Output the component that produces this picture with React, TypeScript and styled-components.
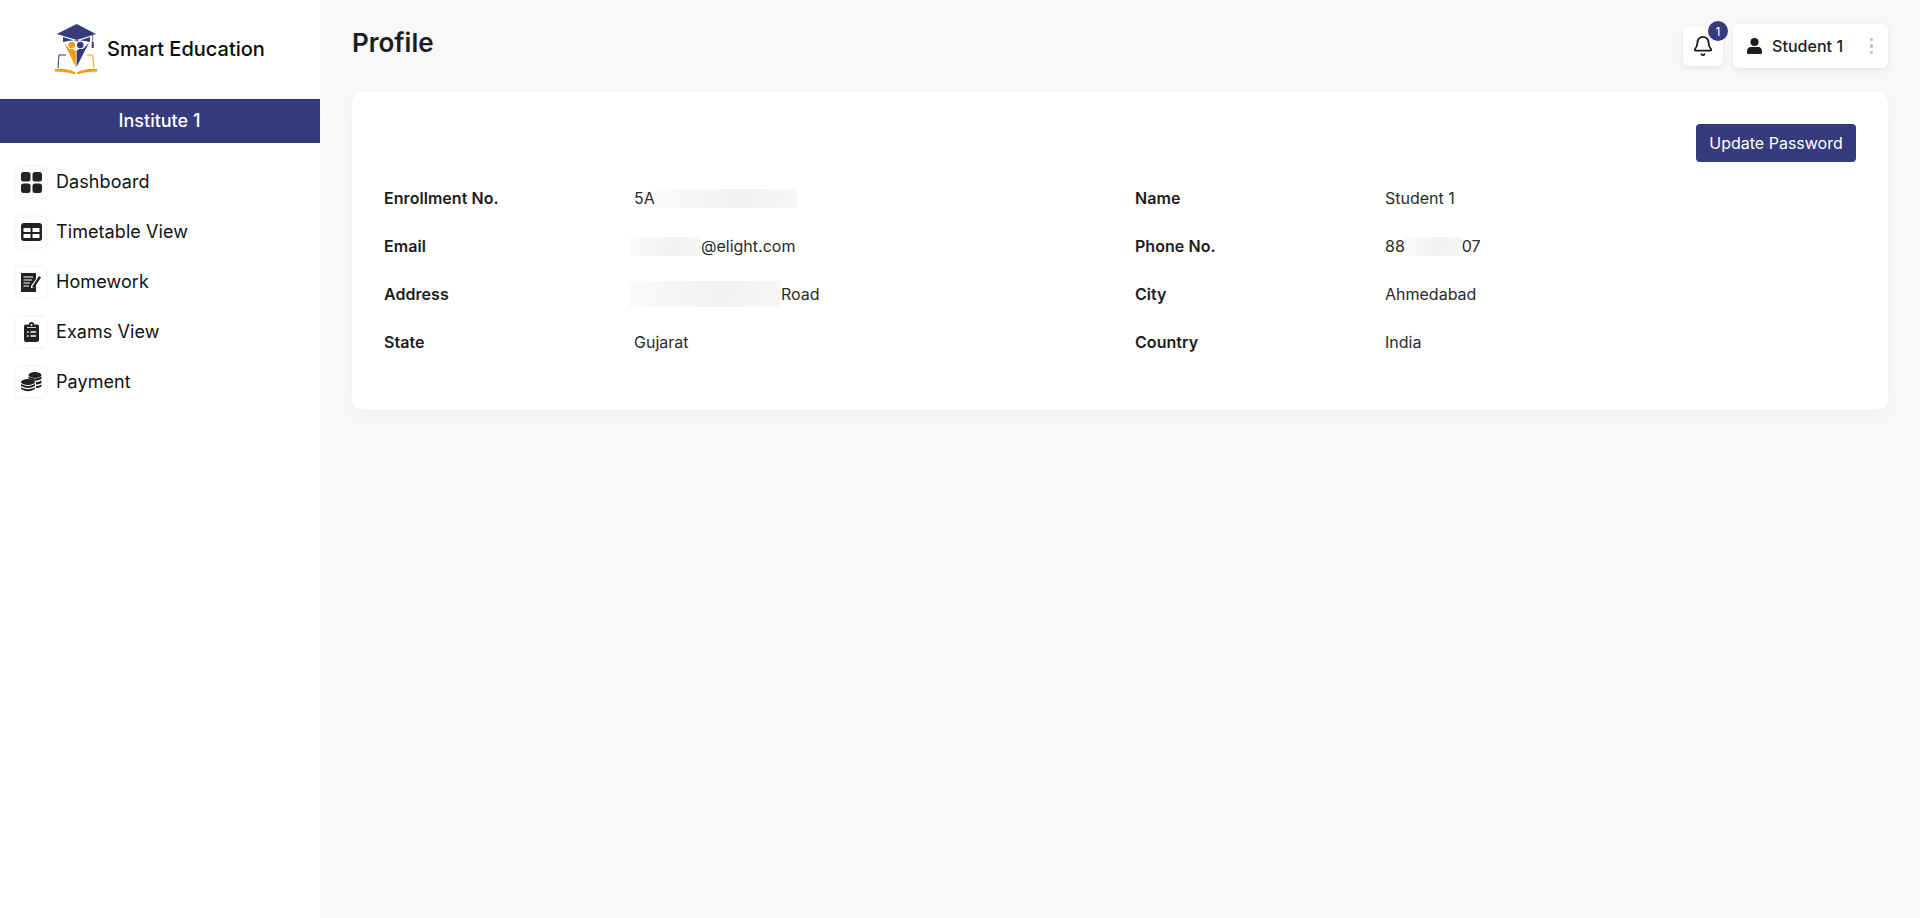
import React from "react";
import styled, { createGlobalStyle } from "styled-components";
import { Bell } from "lucide-react";

const GlobalStyle = createGlobalStyle`
    html, body {
        margin: 0;
        padding: 0;
        height: 100%;
        background: #f8f8f8;
        font-family: Inter, "Liberation Sans", sans-serif;
        color: #1c1c1c;
    }
`;

const navy = "#353b7c";
const orange = "#f39c12";

const LogoMark = () => (
    <svg width="46" height="52" viewBox="0 0 46 52">
        <path d="M2.700 11 L22.700 1 L42 11 L22.700 17 Z" fill={navy} />
        <path d="M9 14 L22.700 18.500 L36 14 V19 Q22.700 15.500 9 19 Z" fill={navy} />
        <path d="M27 12 L38.700 11.500 V19" fill="none" stroke={navy} strokeWidth="0.700" />
        <rect x="37.700" y="19" width="2" height="6" fill={navy} />
        <circle cx="17.700" cy="22" r="3.300" fill={orange} />
        <circle cx="26.300" cy="22" r="3.300" fill={navy} />
        <path d="M10 19.700 L15.500 26 H19 L21.800 28 V44 Z" fill={orange} />
        <path d="M35 19.700 L29 26 H25 L22.600 28 V44 Z" fill={navy} />
        <path d="M12 32 H5 L4 45" fill="none" stroke={navy} strokeWidth="1" />
        <path d="M33 32 H38.700 L40 45" fill="none" stroke={orange} strokeWidth="1" />
        <path d="M1 46 Q13 45 21.500 49.500 V51.500 Q12 48.500 1 48.500 Z" fill={orange} />
        <path d="M43 46 Q31 45 23 49.500 V51.500 Q32 48.500 43 48.500 Z" fill={orange} />
    </svg>
);

const DashboardIcon = () => (
    <svg width="21" height="21" viewBox="0 0 21 21" fill="#222">
        <rect x="0" y="0" width="9.500" height="9.500" rx="2.500" />
        <rect x="11.500" y="0" width="9.500" height="9.500" rx="2.500" />
        <rect x="0" y="11.500" width="9.500" height="9.500" rx="2.500" />
        <rect x="11.500" y="11.500" width="9.500" height="9.500" rx="2.500" />
    </svg>
);

const TimetableIcon = () => (
    <svg width="21" height="18" viewBox="0 0 21 18">
        <rect width="21" height="18" rx="3" fill="#222" />
        <rect x="2.500" y="5" width="7" height="4" fill="#fff" />
        <rect x="11.500" y="5" width="7" height="4" fill="#fff" />
        <rect x="2.500" y="11" width="7" height="4" fill="#fff" />
        <rect x="11.500" y="11" width="7" height="4" fill="#fff" />
    </svg>
);

const HomeworkIcon = () => (
    <svg width="20" height="20" viewBox="0 0 20 20">
        <path d="M0 1 H15 V7 L10 14 V16 H12.500 L15 13 V20 H0 Z" fill="#222" />
        <path d="M2.500 5 H12 M2.500 8 H11 M2.500 11 H9 M2.500 14 H8" stroke="#fff" strokeWidth="1" />
        <path d="M11 15 L18 4 L20 5.500 L13 16 Z" fill="#222" />
    </svg>
);

const ExamsIcon = () => (
    <svg width="15" height="20" viewBox="0 0 15 20">
        <path d="M5 2.500 A2.500 2.500 0 0 1 10 2.500 H13 A2 2 0 0 1 15 4.500 V18 A2 2 0 0 1 13 20 H2 A2 2 0 0 1 0 18 V4.500 A2 2 0 0 1 2 2.500 Z" fill="#222" />
        <circle cx="7.500" cy="3" r="1" fill="#fff" />
        <path d="M3 5.500 H12" stroke="#fff" strokeWidth="0.800" />
        <path d="M3 10 H4.500 M6.500 10 H12 M3 14 H4.500 M6.500 14 H12" stroke="#fff" strokeWidth="1.300" />
    </svg>
);

const PaymentIcon = () => (
    <svg width="21" height="20" viewBox="0 0 21 20" fill="#222">
        <ellipse cx="14" cy="3" rx="6.500" ry="3" />
        <path d="M7.500 4.500 Q14 8.500 20.500 4.500 V7 Q16 9.500 12 8.500 Q9.500 7 7.500 6.500 Z" />
        <path d="M15 10 Q18 10 20.500 8.500 V11 Q18 12.500 15 12.500 Z" />
        <path d="M15 14 Q18 14 20.500 12.500 V14.500 Q18 16 15 16 Z" />
        <ellipse cx="7" cy="10" rx="7" ry="3" />
        <path d="M0 12 Q7 16 14 12 V14 Q7 18 0 14 Z" />
        <path d="M0 15.500 Q7 19 14 15.500 V17 Q7 21.500 0 17 Z" />
    </svg>
);

const UserIcon = () => (
    <svg width="15" height="16" viewBox="0 0 15 16" fill="#1c1c1c">
        <circle cx="7.500" cy="4" r="4" />
        <path d="M0 14 Q0 9 4 9 H11 Q15 9 15 14 V14.500 Q15 16 13.500 16 H1.500 Q0 16 0 14.500 Z" />
    </svg>
);

const Page = styled.div`
    display: flex;
    min-height: 918px;
`;

const Sidebar = styled.aside`
    width: 320px;
    flex: none;
    background: #fff;
`;

const Brand = styled.div`
    height: 99px;
    display: flex;
    align-items: center;
    justify-content: center;
    gap: 7px;
    padding: 0 1px 2px 0;
    box-sizing: border-box;
    font-size: 20px;
    font-weight: 500;
    color: #0c0c0c;
`;

const Institute = styled.div`
    height: 44px;
    display: flex;
    align-items: center;
    justify-content: center;
    padding: 0 1px 1px 0;
    box-sizing: border-box;
    background: ${navy};
    color: #fff;
    font-size: 18px;
    font-weight: 500;
`;

const Nav = styled.nav`
    display: flex;
    flex-direction: column;
    gap: 20px;
    padding: 24px 16px;
`;

const NavItem = styled.a`
    display: flex;
    align-items: center;
    gap: 10px;
    font-size: 18px;
    letter-spacing: 0.08px;
    color: #111;
`;

const NavLabel = styled.span`
    padding-bottom: 2px;
`;

const IconBox = styled.span`
    width: 30px;
    height: 30px;
    display: flex;
    align-items: center;
    justify-content: center;
    background: #fff;
    border-radius: 4px;
    box-shadow: 0 0 4px rgba(0, 0, 0, 0.09);
`;

const Main = styled.main`
    flex: 1;
    padding: 24px 32px;
    min-width: 0;
`;

const Header = styled.header`
    height: 68px;
    display: flex;
    align-items: flex-start;
    justify-content: space-between;
`;

const Title = styled.h1`
    margin: 3px 0 0;
    font-size: 26px;
    line-height: 32px;
    font-weight: 600;
    color: #1c1c1c;
`;

const Actions = styled.div`
    display: flex;
    align-items: flex-start;
    gap: 10px;
`;

const BellButton = styled.div`
    position: relative;
    width: 40px;
    height: 40px;
    margin-top: 2px;
    display: flex;
    align-items: center;
    justify-content: center;
    background: #fff;
    border-radius: 6px;
    box-shadow: 0 2px 6px rgba(0, 0, 0, 0.08);
`;

const Badge = styled.span`
    position: absolute;
    top: -5px;
    right: -5px;
    width: 20px;
    height: 20px;
    border-radius: 50%;
    background: ${navy};
    color: #fff;
    font-size: 12px;
    display: flex;
    align-items: center;
    justify-content: center;
`;

const UserMenu = styled.div`
    width: 155px;
    height: 44px;
    box-sizing: border-box;
    padding: 0 15px 0 14px;
    display: flex;
    align-items: center;
    background: #fff;
    border-radius: 6px;
    box-shadow: 0 2px 6px rgba(0, 0, 0, 0.08);
    font-size: 16px;
    font-weight: 500;
    letter-spacing: 0.05px;
    color: #1c1c1c;
`;

const UserName = styled.span`
    margin-left: 10px;
    flex: 1;
`;

const Dots = styled.span`
    display: flex;
    flex-direction: column;
    gap: 3px;

    i {
        width: 3.500px;
        height: 3.500px;
        border-radius: 50%;
        background: #bdbdbd;
    }
`;

const Card = styled.section`
    background: #fff;
    border-radius: 12px;
    padding: 32px;
    height: 318px;
    box-sizing: border-box;
    box-shadow: 0 4px 16px rgba(0, 0, 0, 0.03);
`;

const CardTop = styled.div`
    display: flex;
    justify-content: flex-end;
    margin-bottom: 12px;
`;

const UpdateButton = styled.button`
    width: 160px;
    height: 38px;
    border: 0;
    border-radius: 4px;
    background: ${navy};
    color: #fff;
    font: 400 16px Inter, sans-serif;
`;

const Details = styled.div`
    display: grid;
    grid-template-columns: 721px 721px;
    column-gap: 30px;
    grid-auto-rows: 48px;
`;

const Field = styled.div`
    display: grid;
    grid-template-columns: 250px 1fr;
    align-items: center;
    font-size: 16px;
`;

const Label = styled.span`
    font-weight: 600;
    letter-spacing: 0.05px;
    color: #1c1c1c;
`;

const Value = styled.span`
    display: flex;
    align-items: center;
    color: #2b2b2b;
`;

const Blur = styled.span<{ $w: number; $h?: number; $shift?: number }>`
    display: inline-block;
    width: ${(p) => p.$w}px;
    height: ${(p) => p.$h ?? 19}px;
    margin-left: ${(p) => p.$shift ?? 0}px;
    background: linear-gradient(100deg, #fafafa 0%, #f2f2f2 60%, #f7f7f7 100%);
`;

const navItems = [
    { label: "Dashboard", icon: <DashboardIcon /> },
    { label: "Timetable View", icon: <TimetableIcon /> },
    { label: "Homework", icon: <HomeworkIcon /> },
    { label: "Exams View", icon: <ExamsIcon /> },
    { label: "Payment", icon: <PaymentIcon /> },
];

const App = () => {
    return (
        <Page>
            <GlobalStyle />
            <Sidebar>
                <Brand>
                    <LogoMark />
                    Smart Education
                </Brand>
                <Institute>Institute 1</Institute>
                <Nav>
                    {navItems.map((item) => (
                        <NavItem key={item.label}>
                            <IconBox>{item.icon}</IconBox>
                            <NavLabel>{item.label}</NavLabel>
                        </NavItem>
                    ))}
                </Nav>
            </Sidebar>
            <Main>
                <Header>
                    <Title>Profile</Title>
                    <Actions>
                        <BellButton>
                            <Bell size={22} color="#1c1c1c" strokeWidth={2} />
                            <Badge>1</Badge>
                        </BellButton>
                        <UserMenu>
                            <UserIcon />
                            <UserName>Student 1</UserName>
                            <Dots>
                                <i />
                                <i />
                                <i />
                            </Dots>
                        </UserMenu>
                    </Actions>
                </Header>
                <Card>
                    <CardTop>
                        <UpdateButton>Update Password</UpdateButton>
                    </CardTop>
                    <Details>
                        <Field>
                            <Label>Enrollment No.</Label>
                            <Value>
                                5A
                                <Blur $w={143} />
                            </Value>
                        </Field>
                        <Field>
                            <Label>Name</Label>
                            <Value>Student 1</Value>
                        </Field>
                        <Field>
                            <Label>Email</Label>
                            <Value>
                                <Blur $w={70} $shift={-3} />
                                @elight.com
                            </Value>
                        </Field>
                        <Field>
                            <Label>Phone No.</Label>
                            <Value>
                                88
                                <Blur $w={57} />
                                07
                            </Value>
                        </Field>
                        <Field>
                            <Label>Address</Label>
                            <Value>
                                <Blur $w={152} $h={26} $shift={-5} />
                                Road
                            </Value>
                        </Field>
                        <Field>
                            <Label>City</Label>
                            <Value>Ahmedabad</Value>
                        </Field>
                        <Field>
                            <Label>State</Label>
                            <Value>Gujarat</Value>
                        </Field>
                        <Field>
                            <Label>Country</Label>
                            <Value>India</Value>
                        </Field>
                    </Details>
                </Card>
            </Main>
        </Page>
    );
};

export default App;
